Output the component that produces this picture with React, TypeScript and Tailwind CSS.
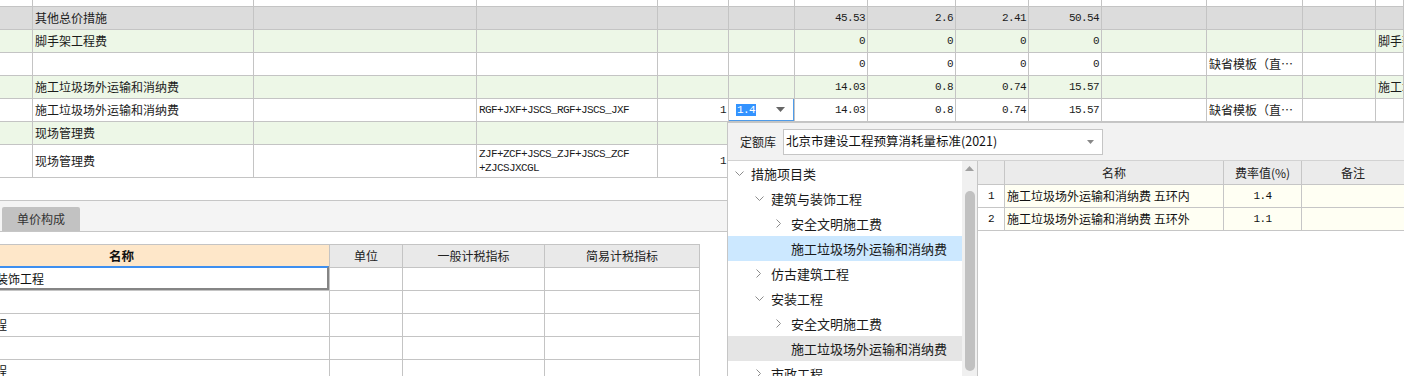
import React from "react";

const GRID =
  "grid grid-cols-[33px_221px_223px_181px_71px_66px_73px_88px_73px_73px_105px_96px_73px_1fr]";
const MONO =
  "font-['Liberation_Mono','DejaVu_Sans_Mono',monospace] text-[11px] tracking-[-0.6px]";

const WHITE = "bg-white";
const GRAY = "bg-[#dcdcdc]";
const GREEN = "bg-[#edf7e7]";

type RowDef = { bg: string; h: string; c: Record<number, React.ReactNode> };

function RateDropdown() {
  return (
    <div className="absolute -top-px -left-px right-0 bottom-0 border border-[#4f9be8] flex items-center pl-[7px] pr-[7px]">
      <span className={`${MONO} bg-[#3393ff] text-white px-[1px] leading-[12px] h-[12px] flex items-center`}>1.4</span>
      <div className="flex-1" />
      <svg width="9" height="5" viewBox="0 0 9 5" className="mr-[1px]">
        <path d="M0 0 L9 0 L4.5 5 Z" fill="#666" />
      </svg>
    </div>
  );
}

const rows: RowDef[] = [
  { bg: WHITE, h: "h-[7px]", c: {} },
  { bg: GRAY, h: "h-[23px]", c: { 1: "其他总价措施", 6: "45.53", 7: "2.6", 8: "2.41", 9: "50.54" } },
  { bg: GREEN, h: "h-[23px]", c: { 1: "脚手架工程费", 6: "0", 7: "0", 8: "0", 9: "0", 13: "脚手架工程费" } },
  { bg: WHITE, h: "h-[23px]", c: { 6: "0", 7: "0", 8: "0", 9: "0", 11: "缺省模板（直…" } },
  {
    bg: GREEN,
    h: "h-[23px]",
    c: { 1: "施工垃圾场外运输和消纳费", 6: "14.03", 7: "0.8", 8: "0.74", 9: "15.57", 13: "施工垃圾场外运输和消纳费" },
  },
  {
    bg: WHITE,
    h: "h-[23px]",
    c: {
      1: "施工垃圾场外运输和消纳费",
      3: "RGF+JXF+JSCS_RGF+JSCS_JXF",
      4: "1",
      5: <RateDropdown />,
      6: "14.03",
      7: "0.8",
      8: "0.74",
      9: "15.57",
      11: "缺省模板（直…",
    },
  },
  { bg: GREEN, h: "h-[23px]", c: { 1: "现场管理费" } },
  {
    bg: WHITE,
    h: "h-[33px]",
    c: {
      1: "现场管理费",
      3: (
        <div className="leading-[14px]">
          <div>ZJF+ZCF+JSCS_ZJF+JSCS_ZCF</div>
          <div>+ZJCSJXCGL</div>
        </div>
      ),
      4: "1",
    },
  },
];

function cellCls(i: number) {
  if (i === 3) return `pl-[2px] ${MONO}`;
  if (i === 4 || (i >= 6 && i <= 9)) return `justify-end pr-[2px] ${MONO}`;
  if (i === 5) return "relative";
  return "pl-[2px] text-[12px]";
}

function TopTable() {
  return (
    <div>
      {rows.map((r, ri) => (
        <div key={ri} className={`${GRID} ${r.h} ${r.bg}`}>
          {Array.from({ length: 14 }).map((_, i) => (
            <div
              key={i}
              className={`flex items-center overflow-hidden whitespace-nowrap border-r border-b border-[#c4c4c4] ${cellCls(i)}`}
            >
              {r.c[i] ?? null}
            </div>
          ))}
        </div>
      ))}
    </div>
  );
}

function ChevDown() {
  return (
    <svg width="9" height="5" viewBox="0 0 9 5">
      <path d="M0.5 0.5 L4.5 4.5 L8.5 0.5" fill="none" stroke="#8c8c8c" strokeWidth="1" />
    </svg>
  );
}
function ChevRight() {
  return (
    <svg width="5" height="9" viewBox="0 0 5 9" className="ml-[1px]">
      <path d="M0.5 0.5 L4.5 4.5 L0.5 8.5" fill="none" stroke="#8c8c8c" strokeWidth="1" />
    </svg>
  );
}

type TreeItem = { level: number; icon: "down" | "right" | null; text: string; bg?: string };
const tree: TreeItem[] = [
  { level: 0, icon: "down", text: "措施项目类" },
  { level: 1, icon: "down", text: "建筑与装饰工程" },
  { level: 2, icon: "right", text: "安全文明施工费" },
  { level: 2, icon: null, text: "施工垃圾场外运输和消纳费", bg: "bg-[#cce8ff]" },
  { level: 1, icon: "right", text: "仿古建筑工程" },
  { level: 1, icon: "down", text: "安装工程" },
  { level: 2, icon: "right", text: "安全文明施工费" },
  { level: 2, icon: null, text: "施工垃圾场外运输和消纳费", bg: "bg-[#e5e5e5]" },
  { level: 1, icon: "right", text: "市政工程" },
];

const indent = ["pl-[7px]", "pl-[27px]", "pl-[47px]"];

function Popup() {
  return (
    <div className="absolute left-[727px] top-[122px] right-0 bottom-0 border-l border-t border-[#c6c6c6] bg-[#f2f2f2] flex flex-col">
      <div className="h-[38px] flex items-center pl-[12px] border-b border-[#d2d2d2]">
        <span className="text-[12px] text-[#222] w-[43px] whitespace-nowrap">定额库</span>
        <div className="w-[320px] h-[26px] bg-white border border-[#c5c5c5] flex items-center pl-[2px] pr-[8px]">
          <span className="text-[12.5px] text-[#111] whitespace-nowrap flex-1">北京市建设工程预算消耗量标准(2021)</span>
          <svg width="7" height="4" viewBox="0 0 7 4">
            <path d="M0 0 L7 0 L3.5 4 Z" fill="#888" />
          </svg>
        </div>
      </div>
      <div className="flex-1 flex bg-white min-h-0">
        <div className="w-[234px] overflow-hidden">
          {tree.map((t, i) => (
            <div key={i} className={`h-[25px] flex items-center ${indent[t.level]} ${t.bg ?? ""}`}>
              <div className="w-[16px] flex items-center">
                {t.icon === "down" ? <ChevDown /> : t.icon === "right" ? <ChevRight /> : null}
              </div>
              <span className="text-[13px] text-[#1a1a1a] whitespace-nowrap leading-[25px]">{t.text}</span>
            </div>
          ))}
        </div>
        <div className="w-[15px] bg-[#f0f0f0] flex flex-col items-center">
          <svg width="9" height="5" viewBox="0 0 9 5" className="mt-[5px]">
            <path d="M0 5 L9 5 L4.5 0 Z" fill="#a0a0a0" />
          </svg>
          <div className="mt-[20px] w-[10px] flex-1 mb-[5px] rounded-[5px] bg-[#c1c1c1]" />
        </div>
        <div className="flex-1 border-l border-[#c6c6c6]">
          <div className="grid grid-cols-[27px_219px_78px_1fr] h-[24px] bg-[#ebebeb] text-[12px] text-[#222]">
            <div className="border-r border-b border-[#c6c6c6]" />
            <div className="border-r border-b border-[#c6c6c6] flex items-center justify-center">名称</div>
            <div className="border-r border-b border-[#c6c6c6] flex items-center justify-center">费率值(%)</div>
            <div className="border-b border-[#c6c6c6] flex items-center justify-center">备注</div>
          </div>
          {[
            ["1", "施工垃圾场外运输和消纳费 五环内", "1.4"],
            ["2", "施工垃圾场外运输和消纳费 五环外", "1.1"],
          ].map(([n, name, rate]) => (
            <div key={n} className="grid grid-cols-[27px_219px_78px_1fr] h-[23px] text-[12px] text-[#111]">
              <div className={`border-r border-b border-[#c6c6c6] bg-white flex items-center justify-center ${MONO}`}>{n}</div>
              <div className="border-r border-b border-[#c6c6c6] bg-[#fffff3] flex items-center pl-[2px] whitespace-nowrap">{name}</div>
              <div className={`border-r border-b border-[#c6c6c6] bg-[#fffff3] flex items-center justify-center ${MONO}`}>{rate}</div>
              <div className="border-b border-[#c6c6c6] bg-[#fffff3]" />
            </div>
          ))}
        </div>
      </div>
    </div>
  );
}

const BGRID = "grid grid-cols-[330px_73px_142px_155px]";

function BottomTable() {
  const rowsB: { text: string; ml: string }[] = [
    { text: "建筑与装饰工程", ml: "ml-[-40px]" },
    { text: "", ml: "" },
    { text: "安装工程", ml: "ml-[-41px]" },
    { text: "", ml: "" },
    { text: "市政工程", ml: "ml-[-41px]" },
  ];
  return (
    <div className="w-[700px] border-t border-[#c4c4c4]">
      <div className={`${BGRID} h-[23px] text-[12px] text-[#222]`}>
        <div className="bg-[#fee7c9] border-r border-b border-[#c4c4c4] flex items-center pl-[109px] font-bold text-[12.5px] text-[#111]">名称</div>
        <div className="bg-[#e9e9e9] border-r border-b border-[#c4c4c4] flex items-center justify-center">单位</div>
        <div className="bg-[#e9e9e9] border-r border-b border-[#c4c4c4] flex items-center justify-center">一般计税指标</div>
        <div className="bg-[#e9e9e9] border-r border-b border-[#c4c4c4] flex items-center justify-center">简易计税指标</div>
      </div>
      {rowsB.map((r, i) => (
        <div key={i} className={`${BGRID} h-[23px] text-[12px] text-[#111]`}>
          <div className="relative border-r border-b border-[#c4c4c4] flex items-center whitespace-nowrap">
            <span className={r.ml}>{r.text}</span>
            {i === 0 && (
              <div className="absolute -top-[2px] left-0 right-0 bottom-0 border-t-2 border-t-[#3d8ff0] border-r-2 border-b-2 border-r-[#858585] border-b-[#858585]" />
            )}
          </div>
          <div className="border-r border-b border-[#c4c4c4]" />
          <div className="border-r border-b border-[#c4c4c4]" />
          <div className="border-r border-b border-[#c4c4c4]" />
        </div>
      ))}
    </div>
  );
}

export default function App() {
  return (
    <div className="relative w-[1404px] h-[376px] overflow-hidden bg-white text-[#1b1b1b] font-['Noto_Sans_CJK_SC','Noto_Sans',sans-serif]">
      <TopTable />
      <div className="h-[22px]" />
      <div className="h-[32px] bg-[#f4f4f4] border-t border-b border-[#c6c6c6] flex items-end">
        <div className="ml-[2px] w-[78px] h-[24px] bg-[#c2c2c2] rounded-t-[2px] flex items-center justify-center text-[12px] text-[#333]">
          单价构成
        </div>
      </div>
      <div className="h-[12px]" />
      <BottomTable />
      <Popup />
    </div>
  );
}
